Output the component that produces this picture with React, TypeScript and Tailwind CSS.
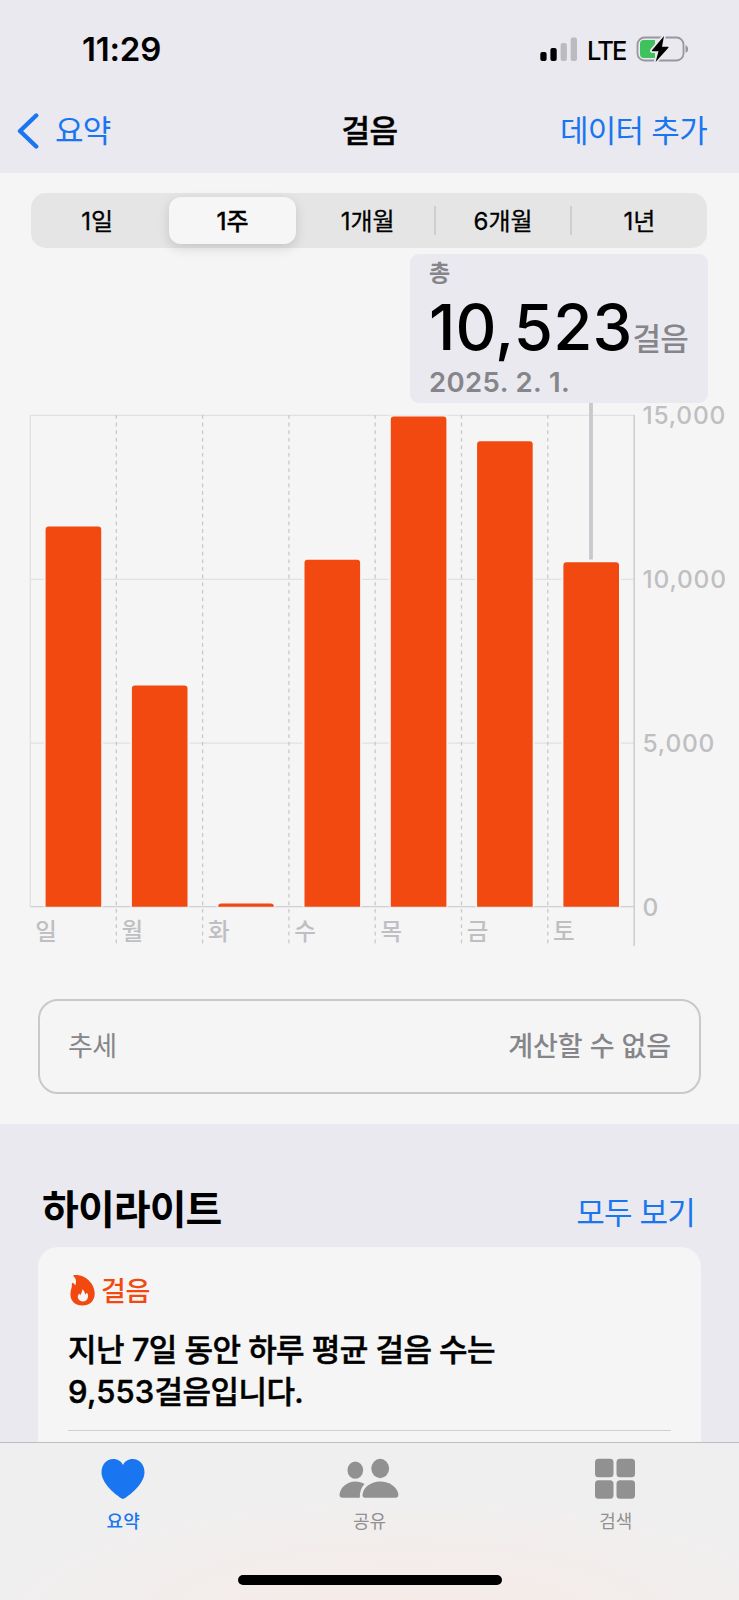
import { useState } from "react";

const ranges = ["1일", "1주", "1개월", "6개월", "1년"];

const days = [
  { label: "일", top: 526.5 },
  { label: "월", top: 685.5 },
  { label: "화", top: 903.5 },
  { label: "수", top: 559.8 },
  { label: "목", top: 416.5 },
  { label: "금", top: 441.2 },
  { label: "토", top: 562.3 },
];

const axis = [
  { label: "15,000", y: 415.3 },
  { label: "10,000", y: 579.4 },
  { label: "5,000", y: 743.2 },
  { label: "0", y: 906.7 },
];

// Chart coordinates: the plot starts at x 30 and each day takes 86.3 units
const LEFT = 30.3;
const STEP = 86.3;
const RIGHT = 634.2;
const BASE = 906.7;

function StatusBar() {
  return (
    <div className="flex h-[98px] items-center justify-between pr-[50px] pl-[82px]">
      <span className="text-[33px] leading-none font-semibold tracking-[-0.2px]">
        11:29
      </span>
      <div className="flex items-center">
        <svg width="38" height="26" viewBox="0 0 38 26">
          <rect x="0.3" y="16" width="6.3" height="9" rx="2" fill="#000" />
          <rect x="10.4" y="12" width="6.3" height="13" rx="2" fill="#000" />
          <rect x="20.6" y="7" width="6.3" height="18" rx="2" fill="#bbbac0" />
          <rect x="30.7" y="1.5" width="6.3" height="23.5" rx="2" fill="#bbbac0" />
        </svg>
        <span className="mt-[3px] ml-[9px] w-[39px] text-[25.5px] leading-none font-medium tracking-[-1.8px]">
          LTE
        </span>
        <svg className="ml-[10px]" width="53" height="28" viewBox="0 0 53 28">
          <rect x="1.5" y="2.5" width="46" height="23" rx="7" fill="none" stroke="#98979d" strokeWidth="1.8" />
          <path d="M49.5 10.2 C53 11.2 53 16.8 49.5 17.8 Z" fill="#98979d" />
          <path d="M8 5 H19 V23 H8 Q4 23 4 19 V9 Q4 5 8 5 Z" fill="#3fc15d" />
          <path
            d="M28 1 L16 15.2 Q15.3 16.2 16.5 16.2 H22.5 L19.6 27 L32.4 12.8 Q33 11.8 31.8 11.8 H26 Z"
            fill="#000"
            stroke="#e9e9ef"
            strokeWidth="3.5"
            paintOrder="stroke"
            strokeLinejoin="round"
          />
        </svg>
      </div>
    </div>
  );
}

function NavBar() {
  return (
    <div className="grid h-[74px] grid-cols-[1fr_auto_1fr] items-center pr-[32px] pl-[17px] pb-[9px] text-[31px] leading-none">
      <button className="flex items-center text-left text-[#1a76f0]">
        <svg width="24" height="38" viewBox="0 0 24 38" fill="none">
          <path d="M19.2 3.5 L3 19 L19.2 34.5" stroke="#1a76f0" strokeWidth="4.4" strokeLinecap="round" strokeLinejoin="round" />
        </svg>
        <span className="ml-[14px] tracking-[-0.8px]">요약</span>
      </button>
      <h1 className="ml-[15px] text-center font-medium tracking-[-0.5px] [-webkit-text-stroke:0.5px]">
        걸음
      </h1>
      <button className="text-right tracking-[-0.7px] whitespace-nowrap text-[#1a76f0]">
        데이터 추가
      </button>
    </div>
  );
}

function RangePicker() {
  const [selected, setSelected] = useState("1주");

  return (
    <div className="mr-8 ml-[30.5px] grid h-[55px] grid-cols-5 rounded-[15px] bg-[#e5e5e6]">
      {ranges.map((range, i) => (
        <button
          key={range}
          onClick={() => setSelected(range)}
          className={
            range === selected
              ? "my-1 mr-[5px] ml-[3px] rounded-[12px] bg-[#f6f6f6] pt-[2px] text-[24px] leading-none font-medium shadow-[0_4px_12px_rgba(0,0,0,0.14)] [-webkit-text-stroke:0.3px]"
              : "relative pt-[2px] pr-[2px] text-[24px] leading-none [-webkit-text-stroke:0.3px] last:pr-0"
          }
        >
          {range}
          {i >= 3 && (
            <span className="absolute top-[13px] -left-[2px] h-[29px] w-[2px] bg-[#cfcfd2]" />
          )}
        </button>
      ))}
    </div>
  );
}

function StepsChart() {
  return (
    <svg className="block overflow-visible" width="739" height="550" viewBox="0 403 739 550">
      {axis.map((tick) => (
        <g key={tick.label}>
          <line x1={LEFT} x2={RIGHT} y1={tick.y} y2={tick.y} stroke={tick.y === BASE ? "#cfcfd1" : "#e0e1e4"} strokeWidth="1.3" />
          <text x="642.5" y={tick.y + 9} fontSize="24.5" fontWeight="500" letterSpacing="0.8" fill="#bfbfc2">
            {tick.label}
          </text>
        </g>
      ))}
      <line x1={LEFT} x2={LEFT} y1="415" y2={BASE} stroke="#e0e1e4" strokeWidth="1.3" />
      <line x1={RIGHT} x2={RIGHT} y1="415" y2="946" stroke="#cfcfd2" strokeWidth="1.6" />
      {days.map((day, i) => {
        const x = LEFT + i * STEP;
        return (
          <g key={day.label}>
            {i > 0 && (
              <line x1={x - 0.3} x2={x - 0.3} y1="415" y2="946" stroke="#c9c9cc" strokeWidth="1.3" strokeDasharray="3.8 3.8" />
            )}
            <rect x={x + 13.3} y={day.top - 1} width="59.5" height={BASE + 1 - day.top} fill="#f5f5f5" />
            <path
              d={`M${x + 15.3} ${BASE} V${day.top + 3} q0 -3 3 -3 h49.6 q3 0 3 3 V${BASE} Z`}
              fill="#f24911"
            />
            <text x={x + 5} y="940" fontSize="23.5" fontWeight="500" fill="#bfbfc2">
              {day.label}
            </text>
          </g>
        );
      })}
      <line x1="591" x2="591" y1="403" y2="559.5" stroke="#c8c8cd" strokeWidth="3.8" />
    </svg>
  );
}

function Callout() {
  return (
    <div className="mt-[6px] mr-[31px] ml-auto h-[149px] w-[298px] rounded-[9px] bg-[#e9e9ef] pl-[19px] font-semibold text-[#85858a]">
      <p className="pt-[6px] text-[23px] leading-[26px]">총</p>
      <p className="flex h-[77px] items-baseline pt-[3px] leading-[76px]">
        <span className="text-[63.5px] font-medium tracking-[0.2px] text-black">10,523</span>
        <span className="text-[31px] font-medium tracking-[-0.7px]">걸음</span>
      </p>
      <p className="text-[27.5px] leading-[38px] tracking-[0.4px]">2025. 2. 1.</p>
    </div>
  );
}

function Highlights() {
  return (
    <section className="h-[318px] overflow-hidden bg-[#e9e9ef] px-[38px] pt-[62px]">
      <div className="flex h-[61px] items-start justify-between pr-[6px] pl-[4px]">
        <h2 className="text-[40px] leading-[48px] font-bold tracking-[-0.9px]">하이라이트</h2>
        <button className="pt-[9px] text-[31px] leading-[36px] tracking-[-0.8px] text-[#1a76f0]">
          모두 보기
        </button>
      </div>
      <div className="h-[220px] rounded-[20px] bg-[#f5f5f5] px-[30px] pt-[28px]">
        <div className="flex h-[32px] items-center text-[#f24911]">
          <svg className="-mt-[3px]" width="27" height="32" viewBox="0 0 27 32">
            <path
              d="M5.5 1.2 C16 -0.5 27 9 26.7 20 C26.5 27 21.5 31.5 14.5 31.5 C7 31.5 2.5 27 2.4 20.5 C2.4 17 3.6 14 3.8 12.5 C4 10.5 3.4 9.5 4.8 8.8 L7.4 11.2 C8.6 7 8 4 5.3 2.3 Z"
              fill="#f24911"
            />
            <path
              d="M14.3 15.2 C17 17 16.6 19.4 17.3 20.5 L18.8 18.8 C20 20 20.4 21.6 19.9 23.5 C19.3 26 17.3 27.4 14.7 27.4 C12 27.4 9.7 25.4 9.8 22.8 C9.8 21.3 10.6 20.4 11.3 19.7 L12.7 20.9 C13 19 14.6 17.4 14.3 15.2 Z"
              fill="#f5f5f5"
            />
          </svg>
          <span className="ml-[6px] text-[27px] leading-none font-medium tracking-[-0.3px]">
            걸음
          </span>
        </div>
        <p className="mt-[22px] text-[31px] leading-[42px] font-medium tracking-[-0.55px] [-webkit-text-stroke:0.5px]">
          지난 7일 동안 하루 평균 걸음 수는
          <br />
          <span className="tracking-[0.2px]">9,553</span>걸음입니다.
        </p>
        <div className="mt-[17px] border-t border-[#cfcfd1]" />
      </div>
    </section>
  );
}

function TabBar() {
  return (
    <nav className="flex h-[158px] flex-col border-t border-[#bdbdc0] bg-[radial-gradient(ellipse_55%_75%_at_55%_110%,#f6ebe7,#f0efef)]">
      <div className="grid h-[132px] grid-cols-3 text-[18px] leading-none text-[#929191]">
        <div className="flex flex-col items-center pt-[15px] text-[#1a76f0]">
          <svg width="44" height="42" viewBox="0 0 44 42" fill="#1a76f0">
            <path d="M22 41 C20 41 0.5 27 0.5 14.5 C0.5 6.5 5.5 1 12.2 1 C17 1 20.3 3.5 22 7 C23.7 3.5 27 1 31.8 1 C38.5 1 43.5 6.5 43.5 14.5 C43.5 27 24 41 22 41 Z" />
          </svg>
          <span className="mt-[12.5px] font-medium">요약</span>
        </div>
        <div className="flex flex-col items-center pt-[15px]">
          <svg width="60" height="42" viewBox="0 0 60 42" fill="#929191">
            <ellipse cx="16.3" cy="12.2" rx="7.8" ry="8.6" />
            <path d="M0.5 36.5 C1.5 29 8.5 23.5 16.3 23.5 C20 23.5 23 24.4 25.6 26 C22.5 29 21 33 20.8 39.8 H3.5 C1.5 39.8 0.4 38.6 0.5 36.5 Z" />
            <ellipse cx="41.2" cy="10.5" rx="8.9" ry="9.7" />
            <path d="M23.5 36.5 C24.5 29 32 23.5 41.2 23.5 C50.5 23.5 58 29 59.3 36 C59.6 38.5 58.5 39.8 56.5 39.8 H26.3 C24.3 39.8 23.3 38.6 23.5 36.5 Z" />
          </svg>
          <span className="mt-[12.5px]">공유</span>
        </div>
        <div className="flex flex-col items-center pt-[15px]">
          <svg width="41" height="42" viewBox="0 0 41 42" fill="#929191">
            <rect x="0" y="0.8" width="18.5" height="18.5" rx="3.5" />
            <rect x="21.5" y="0.8" width="18.5" height="18.5" rx="3.5" />
            <rect x="0" y="22.3" width="18.5" height="18.5" rx="3.5" />
            <rect x="21.5" y="22.3" width="18.5" height="18.5" rx="3.5" />
          </svg>
          <span className="mt-[12.5px]">검색</span>
        </div>
      </div>
      <div className="mx-auto h-[10px] w-[264px] rounded-full bg-black" />
    </nav>
  );
}

export default function App() {
  return (
    <div className="h-[1600px] w-[739px] overflow-hidden bg-[#f5f5f5] font-[Inter,'Noto_Sans_CJK_KR',sans-serif] text-black">
      <header className="h-[173px] bg-[#e9e9ef]">
        <StatusBar />
        <NavBar />
      </header>
      <main className="h-[951px] pt-5">
        <RangePicker />
        <Callout />
        <StepsChart />
        <div className="mx-[38px] mt-[46px] flex h-[95px] items-center justify-between rounded-[20px] border-2 border-[#c9c9cc] px-7 text-[27px] leading-none text-[#85858a]">
          <span className="tracking-[-0.5px]">추세</span>
          <span className="font-medium tracking-[-0.1px]">계산할 수 없음</span>
        </div>
      </main>
      <Highlights />
      <TabBar />
    </div>
  );
}
